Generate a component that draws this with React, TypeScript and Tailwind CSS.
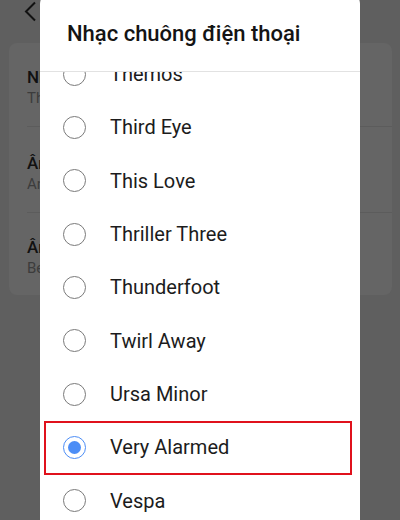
import React from "react";

const items = [
  "Themos",
  "Third Eye",
  "This Love",
  "Thriller Three",
  "Thunderfoot",
  "Twirl Away",
  "Ursa Minor",
  "Very Alarmed",
  "Vespa",
  "Vortex",
];

function Radio({ checked }: { checked: boolean }) {
  if (checked) {
    return (
      <span className="flex h-[23px] w-[23px] items-center justify-center rounded-full border-[1.5px] border-[#4c8df6]">
        <span className="h-[13px] w-[13px] rounded-full bg-[#4c8df6]" />
      </span>
    );
  }
  return <span className="block h-[23px] w-[23px] rounded-full border-[1.5px] border-[#7a7a7a]" />;
}

export default function App() {
  return (
    <div
      className="relative h-[520px] w-[400px] overflow-hidden bg-[#5f5f5f]"
      style={{ fontFamily: "Roboto, 'Noto Sans', sans-serif" }}
    >
      {/* background page */}
      <div className="h-[43px] pl-[24px] pt-[1px]">
        <svg width="14" height="22" viewBox="0 0 14 22">
          <path d="M11 1.5 L2 10.5 L11 19.5" fill="none" stroke="#111" strokeWidth="2" />
        </svg>
      </div>
      <div className="mx-[9px] h-[252px] w-[383px] rounded-[8px] bg-[#656565]">
        <div className="flex h-[83px] flex-col justify-center pl-[18px] pt-[5px]">
          <div className="text-[17px] font-medium leading-[22px] text-[#111]">Nhạc chuông</div>
          <div className="text-[15px] leading-[20px] text-[#3c3c3c]">Thermos</div>
        </div>
        <div className="ml-[18px] h-px bg-[#5c5c5c]" />
        <div className="flex h-[85px] flex-col justify-center pl-[18px] pt-[6px]">
          <div className="text-[17px] font-medium leading-[22px] text-[#111]">Âm báo</div>
          <div className="text-[15px] leading-[20px] text-[#3c3c3c]">Antique</div>
        </div>
        <div className="ml-[18px] h-px bg-[#5c5c5c]" />
        <div className="flex h-[82px] flex-col justify-center pl-[18px] pt-[6px]">
          <div className="text-[17px] font-medium leading-[22px] text-[#111]">Âm báo thức</div>
          <div className="text-[15px] leading-[20px] text-[#3c3c3c]">Beep</div>
        </div>
      </div>

      {/* dialog */}
      <div className="absolute left-[40px] top-[-8px] flex h-[560px] w-[320px] flex-col overflow-hidden rounded-[12px] bg-white">
        <div className="h-[80px] shrink-0 border-b border-[#e2e2e2] pl-[27px] pt-[28px]">
          <div className="text-[22px] font-medium leading-[28px] text-[#141414]">Nhạc chuông điện thoại</div>
        </div>
        <div className="flex-1 overflow-hidden">
          <div className="mt-[-24.5px]">
            {items.map((name) => {
              const checked = name === "Very Alarmed";
              return (
                <div key={name} className="flex h-[53.33px] items-center pl-[23px]">
                  <Radio checked={checked} />
                  <span className="ml-[24px] text-[20px] leading-[26px] text-[#1c1c1c]">{name}</span>
                </div>
              );
            })}
          </div>
        </div>
      </div>

      {/* highlight box */}
      <div className="absolute left-[44px] top-[421px] h-[54px] w-[308px] border-2 border-[#e0111c]" />
    </div>
  );
}
